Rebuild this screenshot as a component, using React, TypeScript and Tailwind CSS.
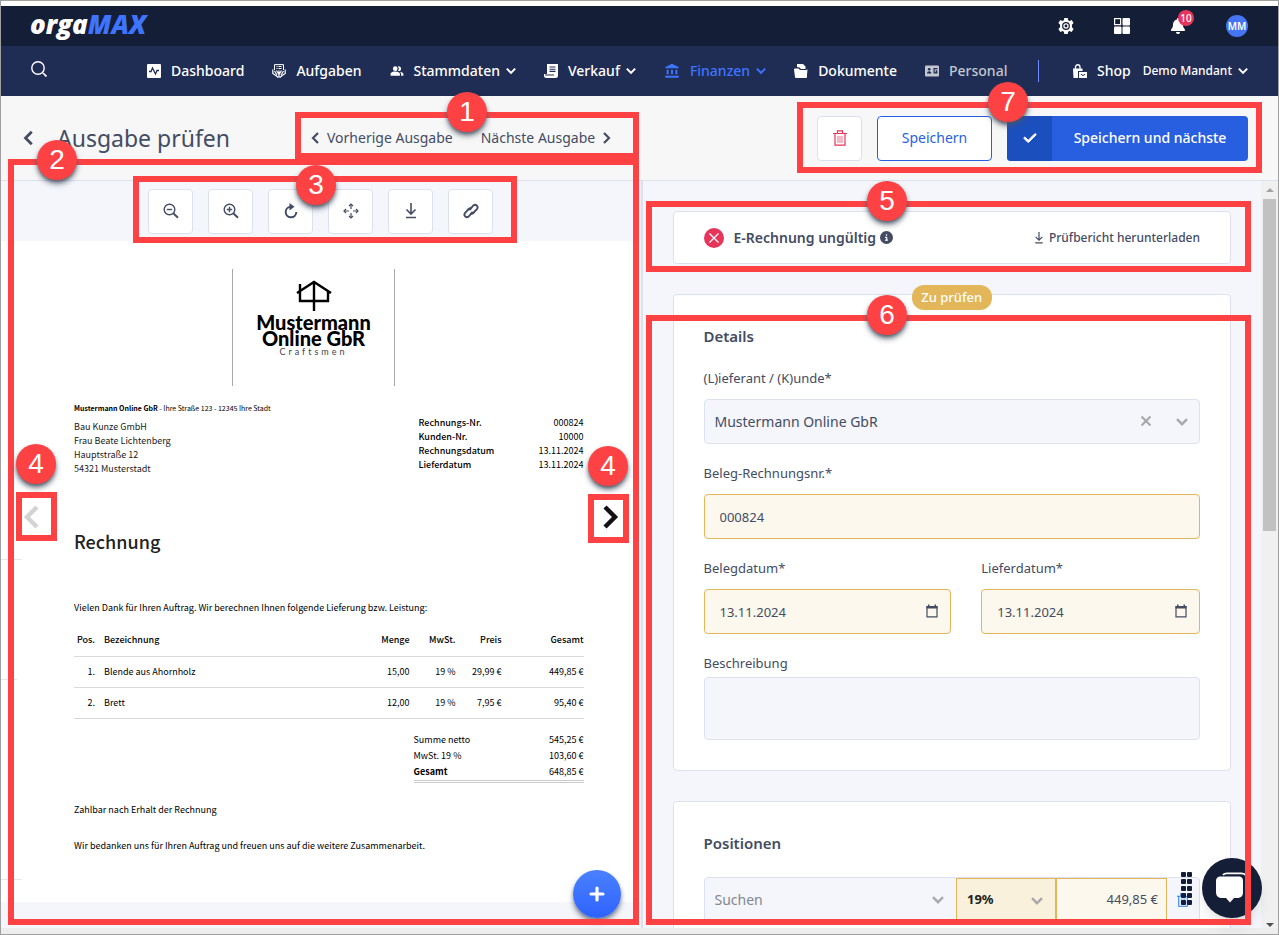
import type { ReactNode } from "react";
import clsx from "clsx";
import { FaBell, FaCheck, FaCircleInfo } from "react-icons/fa6";
import { MdAccountBalance, MdPeopleAlt } from "react-icons/md";

interface NavItem {
  label: string;
  icon: ReactNode;
  menu?: boolean;
  tone?: "active" | "muted";
}

const ChevronDown = ({ className }: { className: string }) => (
  <svg viewBox="0 0 12 8" className={className} fill="none" stroke="currentColor" strokeWidth="2.400">
    <path d="m1 1.200 5 5 5-5" />
  </svg>
);

const ChevronLeft = ({ className }: { className: string }) => (
  <svg viewBox="0 0 8 12" className={className} fill="none" stroke="currentColor" strokeWidth="2.200">
    <path d="m7 1-5 5 5 5" />
  </svg>
);

const ChevronRight = ({ className }: { className: string }) => (
  <svg viewBox="0 0 8 12" className={className} fill="none" stroke="currentColor" strokeWidth="2.200">
    <path d="m1 1 5 5-5 5" />
  </svg>
);

const PulseIcon = () => (
  <svg viewBox="0 0 14 14" className="size-3.5">
    <rect width="14" height="14" rx="1" fill="currentColor" />
    <path d="M2 7.500h2L5.500 4l3 6L10 6.500h2" fill="none" stroke="#1f2d55" strokeWidth="1.300" />
  </svg>
);

const TaskIcon = () => (
  <svg viewBox="0 0 14 14" className="size-3.5" fill="none" stroke="currentColor">
    <path d="M2.500 6V.6h9V6M4.500 2.500h1M6.500 2.500h3M4.500 4.500h1M6.500 4.500h3" />
    <path
      d="M.8 5.500v4l3 2 2.500 2M13.200 5.500v4l-3 2-2.500 2M2.500 7l2.500 4M11.500 7 9 11M4.500 6.500l2.500 4M9.500 6.500 7 10.500M7 6.500v7"
      strokeWidth="1.200"
    />
  </svg>
);

const ReceiptIcon = () => (
  <svg viewBox="0 0 14 14" className="size-3.5" fill="currentColor">
    <path d="M3 0h11v11.500a2.500 2.500 0 0 1-2.500 2.500H2.500A2.500 2.500 0 0 1 0 11.500V10h3z" />
    <path d="M5.500 3h6M5.500 5.200h6M5.500 7.400h6M1 11h9" stroke="#1f2d55" strokeWidth="1.100" />
  </svg>
);

const DocumentIcon = () => (
  <svg viewBox="0 0 14 14" className="size-3.5" fill="currentColor">
    <path d="M3 3V0h6l2.500 2.500V5H7L5.500 3.500z" />
    <path d="M0 5.500A1 1 0 0 1 1 4.500h3.500L6 6h6a1 1 0 0 1 1 1v6a1 1 0 0 1-1 1H2a1 1 0 0 1-1-1z" />
    <path d="M13 5.500 12.500 11" stroke="currentColor" />
  </svg>
);

const PersonCardIcon = () => (
  <svg viewBox="0 0 14 12" className="h-3 w-3.5">
    <rect width="14" height="11" y=".5" rx="1" fill="currentColor" />
    <g fill="#1f2d55">
      <circle cx="4.200" cy="4.300" r="1.300" />
      <path d="M2 8.400c0-3 4.400-3 4.400 0zM8.500 3h4v1.200h-4zM8.500 4h1.200v4H8.500zM8.500 7.200h4v1.200h-4zM10.700 5.300h1.600v2h-1.600z" />
    </g>
  </svg>
);

const ShopIcon = () => (
  <svg viewBox="0 0 14 14" className="size-3.5">
    <path d="M2.500 5V3a2 2 0 0 1 4.500 0v2" fill="none" stroke="currentColor" strokeWidth="1.300" />
    <path d="M0 4.500h9.500v2.500H5v7H.500z" fill="currentColor" />
    <path d="M6 8h8v6H6z" fill="currentColor" />
    <path d="M8 10c.5 1.800 3.500 1.800 4 0" fill="none" stroke="#1f2d55" />
  </svg>
);

const SearchIcon = () => (
  <svg viewBox="0 0 16 16" className="size-4" fill="none" stroke="currentColor">
    <circle cx="7" cy="7" r="6.200" strokeWidth="1.400" />
    <path d="m12 12 3.500 3.500" strokeWidth="1.700" />
  </svg>
);

const GearIcon = () => (
  <svg viewBox="0 0 16 16" className="size-4">
    <path
      d="M6.300 0h3.400l.5 2.200 1.300.7L13.700 2l1.900 3-1.700 1.700v2.600l1.700 1.700-1.900 3-2.200-.9-1.300.7-.5 2.200H6.300l-.5-2.200-1.300-.7-2.200.9-1.900-3 1.700-1.700V6.700L.4 5l1.900-3 2.200.9 1.300-.7z"
      fill="currentColor"
    />
    <circle cx="8" cy="8" r="3.900" fill="#141e37" />
    <circle cx="8" cy="8" r="2.700" fill="currentColor" />
    <circle cx="8" cy="8" r="1.400" fill="#141e37" />
  </svg>
);

const AppsIcon = () => (
  <svg viewBox="0 0 16 16" className="size-4" fill="currentColor">
    <rect x=".600" y=".600" width="6" height="6" fill="none" stroke="currentColor" strokeWidth="1.200" />
    <rect x="8.500" width="7.500" height="7.500" rx="1" />
    <rect y="8.500" width="7.500" height="7.500" rx="1" />
    <rect x="8.500" y="8.500" width="7.500" height="7.500" rx="1" />
  </svg>
);

const TrashIcon = ({ className }: { className: string }) => (
  <svg viewBox="0 0 14 16" className={className} fill="none" stroke="currentColor" strokeWidth="1.200">
    <path d="M0 3.500h14M4.500 3.500V.8h5v2.700M2 3.500v11.700h10V3.500" />
    <path d="M5 6v7M7 6v7M9 6v7" strokeWidth=".700" />
  </svg>
);

const ZoomLensIcon = ({ plus }: { plus?: boolean }) => (
  <svg viewBox="0 0 16 16" className="size-4" fill="none" stroke="currentColor" strokeWidth="1.400">
    <circle cx="6.500" cy="6.500" r="5.300" />
    <path d={plus ? "M3.800 6.500h5.400M6.500 3.800v5.400" : "M3.800 6.500h5.400"} />
    <path d="m10.500 10.500 4.500 4.200" strokeWidth="2" />
  </svg>
);

const RotateIcon = () => (
  <svg viewBox="0 0 16 16" className="size-4" fill="none" stroke="currentColor">
    <path d="M7.500 3.700a5.300 5.300 0 1 0 5.800 5.300" strokeWidth="2" />
    <path d="m6.500 0 5 3.700-5 3.700z" fill="currentColor" stroke="none" />
  </svg>
);

const MoveIcon = () => (
  <svg viewBox="0 0 16 16" className="size-4" fill="none" stroke="currentColor" strokeWidth="1.200">
    <path d="M8 1v5M8 10v5M1 8h5M10 8h5" />
    <path d="M6 3l2-2 2 2M6 13l2 2 2-2M3 6 1 8l2 2M13 6l2 2-2 2" />
  </svg>
);

const DownloadIcon = ({ className = "size-4" }: { className?: string }) => (
  <svg viewBox="0 0 16 16" className={className} fill="none" stroke="currentColor" strokeWidth="1.600">
    <path d="M8 0v11M3.500 6.500 8 11l4.500-4.500M3 14.500h10" />
  </svg>
);

const LinkIcon = () => (
  <svg viewBox="0 0 16 16" className="size-4" fill="none" stroke="currentColor" strokeWidth="1.900">
    <path d="M6.300 7.200 10.400 2.500a2.500 2.500 0 0 1 3.700 3.300L10.300 10a2.300 2.300 0 0 1-2.900.4" />
    <path d="M9.700 8.800 5.600 13.500a2.500 2.500 0 0 1-3.700-3.300L5.700 6a2.300 2.300 0 0 1 2.900-.4" />
  </svg>
);

const CalendarIcon = () => (
  <svg viewBox="0 0 12 13" className="h-3.5 w-3">
    <path d="M1 2h10v10.400H1z" fill="none" stroke="currentColor" strokeWidth="1.200" />
    <path d="M.5 1.500h11V4H.5zM2 0h1.500v2H2zM8.500 0H10v2H8.500z" fill="currentColor" />
  </svg>
);

const PlusIcon = () => (
  <svg viewBox="0 0 16 16" className="size-4" stroke="currentColor" strokeWidth="3.200" strokeLinecap="round">
    <path d="M8 2v12M2 8h12" />
  </svg>
);

const HouseLogo = () => (
  <svg viewBox="0 0 36 32" className="h-8 w-9" fill="none" stroke="#000" strokeWidth="2.400">
    <path d="M1 13 18 2l17 11M4 11v10h28V11M4 13V4M18 1v30" />
  </svg>
);

const ChatIcon = () => (
  <svg viewBox="0 0 34 32" className="h-8 w-[34px]">
    <path d="M8 3c1-1.500 2-1.700 4-1.700h14c4 0 6 2 6 6v12" fill="none" stroke="#fff" strokeWidth="1.800" />
    <path
      d="M6 4.500h17c4 0 5 1.500 5 5v10c0 4-1 6-5 6.500h-4L15 30.500 11 26H6c-3.500-.5-5-2.500-5-6.500v-10c0-3.500 1.500-5 5-5z"
      fill="#fff"
    />
  </svg>
);

const navItems: NavItem[] = [
  { label: "Dashboard", icon: <PulseIcon /> },
  { label: "Aufgaben", icon: <TaskIcon /> },
  { label: "Stammdaten", icon: <MdPeopleAlt className="size-3.5" />, menu: true },
  { label: "Verkauf", icon: <ReceiptIcon />, menu: true },
  { label: "Finanzen", icon: <MdAccountBalance className="size-4" />, menu: true, tone: "active" },
  { label: "Dokumente", icon: <DocumentIcon /> },
  { label: "Personal", icon: <PersonCardIcon />, tone: "muted" },
];

const TopBar = () => (
  <div className="flex h-10 items-center justify-between bg-[#141e37] pr-[30px] pl-[29px] text-white">
    <a href="#start" className="pb-1 font-['Open_Sans'] text-[26px] leading-8 font-extrabold italic">
      orga<span className="text-[#3f74ff]">MAX</span>
    </a>
    <div className="flex items-center gap-10">
      <button type="button" aria-label="Einstellungen">
        <GearIcon />
      </button>
      <button type="button" aria-label="Apps">
        <AppsIcon />
      </button>
      <button type="button" aria-label="Benachrichtigungen" className="relative">
        <FaBell className="size-4" />
        <span className="absolute -top-2 left-2 flex size-4 items-center justify-center rounded-full bg-[#e6355b] text-[10px] font-medium">
          10
        </span>
      </button>
      <button
        type="button"
        className="flex size-[22px] items-center justify-center rounded-full bg-[#4575f3] text-[10px] font-semibold"
      >
        MM
      </button>
    </div>
  </div>
);

const MainNav = () => (
  <nav className="flex h-[50px] items-center bg-[#1f2d55] pr-[30px] pl-[30px] text-sm font-medium text-white">
    <button type="button" aria-label="Suchen" className="mr-[100px] pb-1">
      <SearchIcon />
    </button>
    <div className="flex flex-1 items-center gap-7">
      {navItems.map((item) => (
        <a
          key={item.label}
          href={`#${item.label.toLowerCase()}`}
          className={clsx(
            "flex items-center gap-2.5",
            item.tone === "active" && "text-[#3f74ff]",
            item.tone === "muted" && "text-[#c3c6cf]",
          )}
        >
          {item.icon}
          <span className="flex items-center gap-1.5">
            {item.label}
            {item.menu && <ChevronDown className="h-2 w-2.5" />}
          </span>
        </a>
      ))}
    </div>
    <div className="mr-[34px] h-[22px] w-px bg-[#6f8cff]" />
    <a href="#shop" className="mr-3 flex items-center gap-2.5">
      <ShopIcon />
      Shop
    </a>
    <button type="button" className="flex items-center gap-1.5 text-xs">
      Demo Mandant
      <ChevronDown className="h-2 w-2.5" />
    </button>
  </nav>
);

const PageHeader = () => (
  <header className="flex h-[85px] items-center border-b border-[#dce1ef] bg-[#f7f7f7] pr-[30px] pl-[22px]">
    <button type="button" aria-label="Zurück" className="mr-6">
      <ChevronLeft className="h-4 w-2.5" />
    </button>
    <h1 className="w-[254px] text-[23px] leading-8">Ausgabe prüfen</h1>
    <div className="flex items-center gap-7 text-sm">
      <button type="button" className="flex items-center gap-2">
        <ChevronLeft className="h-3 w-2" />
        Vorherige Ausgabe
      </button>
      <button type="button" className="flex items-center gap-2">
        Nächste Ausgabe
        <ChevronRight className="h-3 w-2" />
      </button>
    </div>
    <div className="ml-auto flex gap-[15px] text-sm">
      <button
        type="button"
        aria-label="Löschen"
        className="flex size-[45px] items-center justify-center rounded border border-[#dce1ef] bg-white text-[#e6355b]"
      >
        <TrashIcon className="h-4 w-3.5" />
      </button>
      <button
        type="button"
        className="h-[45px] w-[115px] rounded border border-[#285fe0] bg-white text-[#285fe0]"
      >
        Speichern
      </button>
      <button
        type="button"
        className="flex h-[45px] w-[241px] items-stretch overflow-hidden rounded bg-[#285fe0] font-medium text-white"
      >
        <span className="flex w-[45px] items-center justify-center bg-[#1c4fbe]">
          <FaCheck className="size-3.5" stroke="currentColor" strokeWidth="36" />
        </span>
        <span className="flex flex-1 items-center justify-center">Speichern und nächste</span>
      </button>
    </div>
  </header>
);

const viewerTools = [
  { label: "Verkleinern", icon: <ZoomLensIcon /> },
  { label: "Vergrößern", icon: <ZoomLensIcon plus /> },
  { label: "Drehen", icon: <RotateIcon /> },
  { label: "Verschieben", icon: <MoveIcon /> },
  { label: "Herunterladen", icon: <DownloadIcon /> },
  { label: "Verknüpfen", icon: <LinkIcon /> },
];

const invoiceMeta = [
  ["Rechnungs-Nr.", "000824"],
  ["Kunden-Nr.", "10000"],
  ["Rechnungsdatum", "13.11.2024"],
  ["Lieferdatum", "13.11.2024"],
];

const invoiceRows = [
  ["1.", "Blende aus Ahornholz", "15,00", "19 %", "29,99 €", "449,85 €"],
  ["2.", "Brett", "12,00", "19 %", "7,95 €", "95,40 €"],
];

const Invoice = () => (
  <article className="relative bg-white pt-7 pr-[57px] pb-12 pl-[73px] font-['Noto_Sans_CJK_JP',sans-serif] text-[9px] leading-4 text-black">
    {/* fold and punch marks at the paper edge */}
    <div className="absolute top-[318px] left-0 h-px w-[21px] bg-[#e6e6e6]" />
    <div className="absolute top-[438px] left-0 h-px w-4 bg-[#e6e6e6]" />
    <div className="absolute top-[638px] left-0 h-px w-[21px] bg-[#e6e6e6]" />

    <div className="ml-[158px] flex h-[117px] w-[163px] flex-col items-center border-x border-[#a8a8a8] pt-[11px]">
      <HouseLogo />
      <div className="mt-0.5 text-center font-[Lato] text-xl leading-4 font-black">
        Mustermann
        <br />
        Online GbR
      </div>
      <div className="font-[Lato] text-[9px] leading-3 tracking-[3px] text-[#444]">Craftsmen</div>
    </div>
    <div className="mt-4 text-[7px] leading-3">
      <b>Mustermann Online GbR</b> - Ihre Straße 123 - 12345 Ihre Stadt
    </div>
    <div className="mt-0.5 flex items-start justify-between leading-[14px]">
      <address className="pt-1 not-italic text-[#222]">
        Bau Kunze GmbH
        <br />
        Frau Beate Lichtenberg
        <br />
        Hauptstraße 12
        <br />
        54321 Musterstadt
      </address>
      <table className="w-[165px]">
        <tbody>
          {invoiceMeta.map(([label, value]) => (
            <tr key={label}>
              <th scope="row" className="p-0 text-left font-medium">
                {label}
              </th>
              <td className="p-0 text-right">{value}</td>
            </tr>
          ))}
        </tbody>
      </table>
    </div>
    <h2 className="mt-[51px] text-lg leading-7 font-medium text-[#222]">Rechnung</h2>
    <p className="mt-[45px]">
      Vielen Dank für Ihren Auftrag. Wir berechnen Ihnen folgende Lieferung bzw. Leistung:
    </p>
    <table className="mt-[9px] w-full table-fixed">
      <thead>
        <tr className="h-[31px] border-b border-[#d9d9d9] text-right [&>th]:font-medium">
          <th className="w-[21px]">Pos.</th>
          <th className="pl-[9px] text-left">Bezeichnung</th>
          <th className="w-[60px]">Menge</th>
          <th className="w-[46px]">MwSt.</th>
          <th className="w-[46px]">Preis</th>
          <th className="w-[82px]">Gesamt</th>
        </tr>
      </thead>
      <tbody>
        {invoiceRows.map(([pos, name, ...values]) => (
          <tr key={pos} className="h-[31px] border-b border-[#d9d9d9] text-right">
            <td>{pos}</td>
            <td className="pl-[9px] text-left">{name}</td>
            {values.map((value, index) => (
              <td key={index}>{value}</td>
            ))}
          </tr>
        ))}
      </tbody>
    </table>
    <dl className="mt-[13px] ml-auto grid w-[170px] grid-cols-2 border-b-3 border-double border-[#c9c9c9]">
      <dt>Summe netto</dt>
      <dd className="text-right">545,25 €</dd>
      <dt>MwSt. 19 %</dt>
      <dd className="text-right">103,60 €</dd>
      <dt className="font-bold">Gesamt</dt>
      <dd className="text-right">648,85 €</dd>
    </dl>
    <p className="mt-[19px]">Zahlbar nach Erhalt der Rechnung</p>
    <p className="mt-5">
      Wir bedanken uns für Ihren Auftrag und freuen uns auf die weitere Zusammenarbeit.
    </p>
    <button type="button" aria-label="Vorherige Seite" className="absolute top-[264px] left-[22px] text-[#d3d3d3]">
      <ChevronLeft className="h-6 w-4" />
    </button>
    <button type="button" aria-label="Nächste Seite" className="absolute top-[264px] right-[22px] text-[#111]">
      <ChevronRight className="h-6 w-4" />
    </button>
  </article>
);

const ViewerPane = () => (
  <section className="relative w-[calc(50%+3px)] shrink-0 border-r-2 border-[#dce1ef]">
    <div className="flex h-[60px] items-center justify-center gap-[15px]">
      {viewerTools.map((tool) => (
        <button
          key={tool.label}
          type="button"
          aria-label={tool.label}
          className="flex size-[45px] items-center justify-center rounded border border-[#dce1ef] bg-white"
        >
          {tool.icon}
        </button>
      ))}
    </div>
    <Invoice />
    <button
      type="button"
      aria-label="Neu"
      className="absolute right-5 bottom-[10px] flex size-12 items-center justify-center rounded-full bg-linear-to-b from-[#4a80ff] to-[#2f62ff] text-white shadow-md shadow-gray-500"
    >
      <PlusIcon />
    </button>
  </section>
);

const Card = ({ className, children }: { className?: string; children: ReactNode }) => (
  <div className={clsx("rounded border border-[#dce1ef] bg-white px-[30px]", className)}>{children}</div>
);

interface FieldProps {
  id: string;
  label: string;
  value: string;
  date?: boolean;
}

const Field = ({ id, label, value, date }: FieldProps) => (
  <div>
    <label htmlFor={id} className="block text-[13px] leading-5">
      {label}
    </label>
    <div className="relative mt-[11px]">
      <input
        id={id}
        defaultValue={value}
        className="h-[45px] w-full rounded border border-[#e2b659] bg-[#fdf8ed] px-[15px] text-[13px]"
      />
      {date && (
        <button type="button" aria-label={`${label} wählen`} className="absolute top-[15px] right-[13px]">
          <CalendarIcon />
        </button>
      )}
    </div>
  </div>
);

const FormPane = () => (
  <section className="min-w-0 flex-1 overflow-hidden px-[30px] pt-[30px]">
    <Card className="flex h-[53px] items-center">
      <span className="mr-2.5 flex size-5 items-center justify-center rounded-full bg-[#e6355b]">
        <svg viewBox="0 0 10 10" className="size-2.5" stroke="#fff" strokeWidth="1.300">
          <path d="m.5.5 9 9M9.500.5l-9 9" />
        </svg>
      </span>
      <span className="text-sm font-semibold">E-Rechnung ungültig</span>
      <FaCircleInfo className="ml-1 size-[13px]" />
      <a href="#pruefbericht" className="ml-auto flex items-center gap-1 text-xs font-medium">
        <DownloadIcon className="size-3" />
        Prüfbericht herunterladen
      </a>
    </Card>

    <Card className="relative mt-[30px] pt-[29px] pb-[30px]">
      <span className="absolute -top-2.5 left-1/2 flex h-[25px] w-20 -translate-x-1/2 items-center justify-center rounded-xl bg-[#e2b659] text-[13px] font-medium text-white">
        Zu prüfen
      </span>
      <h2 className="text-[15px] leading-6 font-semibold">Details</h2>
      <div className="mt-5 flex flex-col gap-[19px]">
        <div>
          <label htmlFor="supplier" className="block text-[13px] leading-5">
            (L)ieferant / (K)unde*
          </label>
          <div className="relative mt-[11px]">
            <select
              id="supplier"
              className="h-[45px] w-full appearance-none rounded border border-[#dce1ef] bg-[#f5f6fb] px-2.5 text-sm"
            >
              <option>Mustermann Online GbR</option>
            </select>
            <button type="button" aria-label="Auswahl leeren" className="absolute top-[17px] right-[49px] text-[#a9a9a9]">
              <svg viewBox="0 0 10 10" className="size-2.5" stroke="currentColor" strokeWidth="2.200">
                <path d="m.5.5 9 9M9.500.5l-9 9" />
              </svg>
            </button>
            <ChevronDown className="pointer-events-none absolute top-[19px] right-3 h-2 w-3 text-[#a9a9a9]" />
          </div>
        </div>
        <Field id="invoice-number" label="Beleg-Rechnungsnr.*" value="000824" />
        <div className="grid grid-cols-[248fr_219fr] gap-[30px]">
          <Field id="invoice-date" label="Belegdatum*" value="13.11.2024" date />
          <Field id="delivery-date" label="Lieferdatum*" value="13.11.2024" date />
        </div>
        <div>
          <label htmlFor="description" className="block text-[13px] leading-5">
            Beschreibung
          </label>
          <textarea
            id="description"
            className="mt-1 block h-[63px] w-full resize-none rounded border border-[#dce1ef] bg-[#f5f6fb] p-2.5 text-sm"
          />
        </div>
      </div>
    </Card>

    <Card className="mt-[30px] h-60 pt-[29px]">
      <h2 className="text-[15px] leading-6 font-semibold">Positionen</h2>
      <div className="mt-[22px] flex h-[45px] rounded border border-[#dce1ef] bg-[#f5f6fb] text-sm">
        <div className="relative flex-1">
          <select aria-label="Position" className="size-full appearance-none px-2.5 text-[#85878f]">
            <option>Suchen</option>
          </select>
          <ChevronDown className="pointer-events-none absolute top-[18px] right-3 h-2 w-3 text-[#a9a9a9]" />
        </div>
        <div className="relative w-[100px] border border-[#e2b659] bg-[#f9f1dc]">
          <select aria-label="Steuersatz" className="size-full appearance-none px-2.5 text-[13px] font-bold text-[#222]">
            <option>19%</option>
          </select>
          <ChevronDown className="pointer-events-none absolute top-[18px] right-3 h-2 w-3 text-[#a9a9a9]" />
        </div>
        <input
          aria-label="Betrag"
          defaultValue="449,85 €"
          className="w-[111px] border border-[#e2b659] bg-[#fdf8ed] px-2 text-right text-[13px]"
        />
        <button type="button" aria-label="Position löschen" className="flex w-8 items-center justify-center text-[#2a7df0]">
          <TrashIcon className="h-3.5 w-3" />
        </button>
      </div>
    </Card>
  </section>
);

const Scrollbar = () => (
  <div aria-hidden className="flex w-[17px] shrink-0 flex-col items-center bg-[#f0f0f0]">
    <svg viewBox="0 0 8 4" className="my-[7px] h-1 w-2 shrink-0">
      <path d="M4 0 8 4H0z" fill="#a3a3a3" />
    </svg>
    <div className="h-[332px] w-[13px] bg-[#c1c1c1]" />
    <svg viewBox="0 0 8 4" className="mt-auto mb-px h-1 w-2 shrink-0">
      <path d="M4 4 0 0h8z" fill="#505050" />
    </svg>
  </div>
);

const ChatWidget = () => (
  <div className="absolute right-[17px] bottom-[17px] flex items-center">
    <div className="mr-2.5 grid grid-cols-2 gap-x-px gap-y-0.5">
      {Array.from({ length: 10 }, (_, index) => (
        <span key={index} className="size-[5px] rounded-[1px] bg-[#141e37]" />
      ))}
    </div>
    <button
      type="button"
      aria-label="Chat öffnen"
      className="flex size-[60px] items-center justify-center rounded-full bg-[#141e37] shadow-lg"
    >
      <ChatIcon />
    </button>
  </div>
);

const frames = [
  "top-[112px] left-[295px] h-[47px] w-[344px]",
  "top-[159px] bottom-[10px] left-2 w-[631px]",
  "top-[176px] left-[133px] h-[67px] w-96",
  "top-[492px] left-4 h-[49px] w-[41px]",
  "top-[494px] left-[588px] h-[49px] w-[41px]",
  "top-[201px] right-7 left-[646px] h-[71px]",
  "top-[315px] right-7 bottom-[10px] left-[646px]",
  "top-[102px] right-[17px] h-[71px] w-[465px]",
];

const badges = [
  { number: 1, place: "top-[92px] left-[447px]" },
  { number: 2, place: "top-[140px] left-[37px]" },
  { number: 3, place: "top-[165px] left-[296px]" },
  { number: 4, place: "top-[444px] left-4" },
  { number: 4, place: "top-[446px] left-[588px]" },
  { number: 5, place: "top-[181px] left-[867px]" },
  { number: 6, place: "top-[295px] left-[867px]" },
  { number: 7, place: "top-[82px] left-[988px]" },
];

const Annotations = () => (
  <div className="pointer-events-none absolute inset-0">
    {frames.map((place) => (
      <div key={place} className={clsx("absolute border-6 border-[#fe4244]", place)} />
    ))}
    {badges.map(({ number, place }) => (
      <div
        key={place}
        className={clsx(
          "absolute flex size-10 items-center justify-center rounded-full bg-[#fe4244] font-['Liberation_Sans',sans-serif] text-[28px] text-white shadow-md shadow-gray-600",
          place,
        )}
      >
        {number}
      </div>
    ))}
  </div>
);

const App = () => (
  <div className="relative h-screen overflow-hidden bg-white font-['Noto_Sans',sans-serif] text-[#434c63]">
    <div className="flex h-full flex-col border border-[#a0a0a0] pt-[5px]">
      <TopBar />
      <MainNav />
      <PageHeader />
      <main className="flex min-h-0 flex-1 bg-[#f5f6fb]">
        <ViewerPane />
        <FormPane />
        <Scrollbar />
      </main>
      <div className="h-1.5 shrink-0 bg-[#ededed]" />
    </div>
    <ChatWidget />
    <Annotations />
  </div>
);

export default App;
